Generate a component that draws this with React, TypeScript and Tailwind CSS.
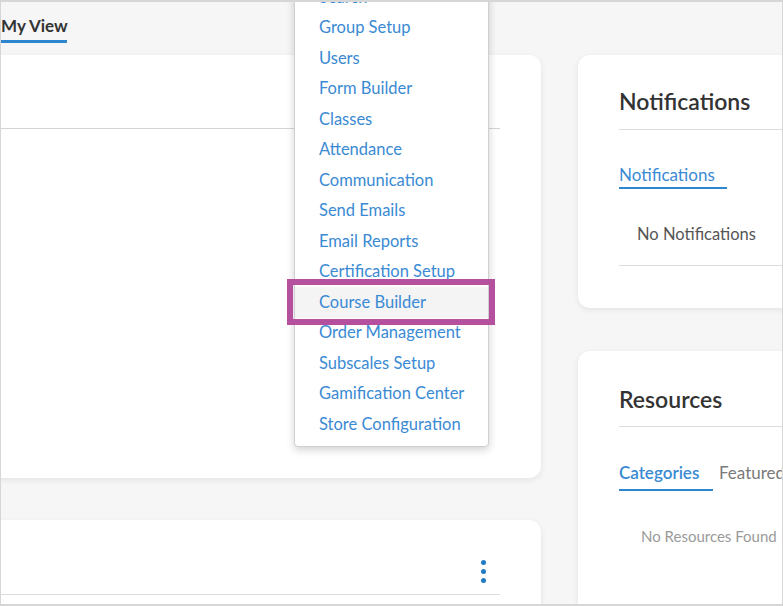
import React from "react";

const items = [
  "Search",
  "Group Setup",
  "Users",
  "Form Builder",
  "Classes",
  "Attendance",
  "Communication",
  "Send Emails",
  "Email Reports",
  "Certification Setup",
  "Course Builder",
  "Order Management",
  "Subscales Setup",
  "Gamification Center",
  "Store Configuration",
];

export default function App() {
  return (
    <div className="relative w-[783px] h-[606px] overflow-hidden bg-[#f6f6f6] pt-[2px] pl-[1px] font-['Lato',_'Noto_Sans',_sans-serif]">
      {/* header */}
      <div className="h-[53px] pt-[12px]">
        <div className="inline-block w-[66px] text-[17px] leading-[1.2] font-bold text-[#333] border-b-[3px] border-[#2f86d0] pb-[4px] whitespace-nowrap">
          My View
        </div>
      </div>

      {/* content */}
      <div className="flex items-start gap-[37px]">
        <div className="-ml-[30px] w-[570px] shrink-0">
          <div className="h-[423px] rounded-[12px] bg-white shadow-[0_2px_6px_rgba(0,0,0,0.08)]">
            <div className="h-[74px] mr-[41px] border-b border-[#d4d4d4]" />
          </div>
          <div className="mt-[42px] h-[140px] rounded-[12px] bg-white shadow-[0_2px_6px_rgba(0,0,0,0.08)] pt-[40px]">
            <div className="mr-[41px]">
              <div className="flex justify-end pr-[14px]">
                <div className="flex flex-col gap-[4.2px]">
                  <span className="block w-[5px] h-[5px] rounded-full bg-[#1f7bc6]" />
                  <span className="block w-[5px] h-[5px] rounded-full bg-[#1f7bc6]" />
                  <span className="block w-[5px] h-[5px] rounded-full bg-[#1f7bc6]" />
                </div>
              </div>
              <div className="mt-[11px] border-b border-[#dcdcdc]" />
            </div>
          </div>
        </div>

        <div className="w-[260px] shrink-0">
          <div className="h-[253px] rounded-[12px] bg-white shadow-[0_2px_6px_rgba(0,0,0,0.08)] pl-[41px] pt-[33px]">
            <div className="text-[23px] leading-[1.2] font-semibold text-[#333] pb-[13px] border-b border-[#dcdcdc] whitespace-nowrap">
              Notifications
            </div>
            <div className="mt-[35px] inline-block w-[108px] text-[17px] leading-[1.2] text-[#3a8ad4] border-b-2 border-[#2f86d0] pb-[2px] whitespace-nowrap">
              Notifications
            </div>
            <div className="mt-[36px] pl-[18px] text-[16.5px] leading-[1.2] text-[#555] pb-[20px] border-b border-[#dcdcdc] whitespace-nowrap">
              No Notifications
            </div>
          </div>

          <div className="mt-[43px] h-[300px] rounded-[12px] bg-white shadow-[0_2px_6px_rgba(0,0,0,0.08)] pl-[41px] pt-[35px]">
            <div className="text-[23px] leading-[1.2] font-semibold text-[#333] pb-[12px] border-b border-[#dcdcdc] whitespace-nowrap">
              Resources
            </div>
            <div className="mt-[36px] flex items-start gap-[6px] whitespace-nowrap">
              <div className="w-[94px] text-[17px] leading-[1.2] font-semibold text-[#3a8ad4] border-b-2 border-[#2f86d0] pb-[6px]">
                Categories
              </div>
              <div className="text-[17px] leading-[1.2] text-[#7a7a7a]">Featured</div>
            </div>
            <div className="mt-[36px] pl-[22px] text-[15px] leading-[1.2] text-[#9a9a9a] whitespace-nowrap">
              No Resources Found
            </div>
          </div>
        </div>
      </div>

      {/* dropdown menu */}
      <div className="absolute left-[294px] top-[-19px] w-[195px] bg-white border border-[#d0d0d0] rounded-b-[4px] shadow-[0_3px_8px_rgba(0,0,0,0.18)] pb-[6px]">
        {items.map((it) => (
          <div
            key={it}
            className={
              it === "Course Builder"
                ? "relative h-[30.5px] flex items-center pl-[24px] text-[16.5px] text-[#3a8ad4] bg-[#f4f4f4] whitespace-nowrap"
                : "relative h-[30.5px] flex items-center pl-[24px] text-[16.5px] text-[#3a8ad4] whitespace-nowrap"
            }
          >
            {it}
            {it === "Course Builder" && (
              <span className="absolute -left-[8px] -right-[7px] -top-[8px] -bottom-[7px] border-[6px] border-[#b4509d] pointer-events-none" />
            )}
          </div>
        ))}
      </div>

      {/* screenshot frame */}
      <div className="pointer-events-none absolute inset-0 border-x border-y-2 border-[#d6d6d6]" />
    </div>
  );
}
